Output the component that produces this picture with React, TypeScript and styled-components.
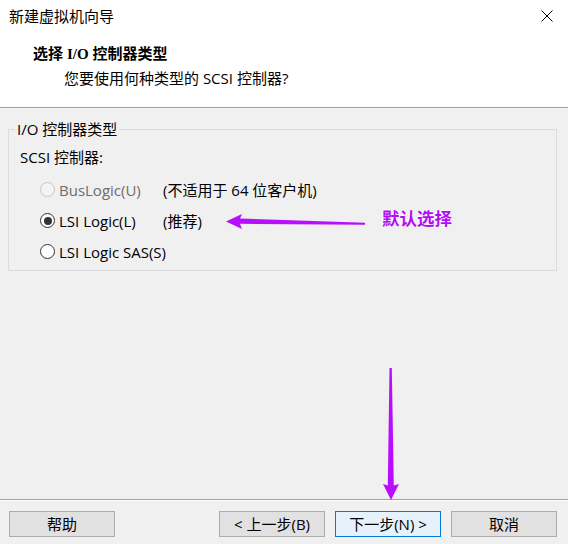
import React from "react";
import styled, { createGlobalStyle } from "styled-components";

const Global = createGlobalStyle`
  html, body { margin: 0; padding: 0; background: #f0f0f0; }
  body { font-family: "Open Sans", "Noto Sans CJK SC", sans-serif; font-size: 15px; color: #000; }
`;

const Window = styled.div`
  position: relative;
  width: 568px;
  height: 544px;
  display: flex;
  flex-direction: column;
  background: #f0f0f0;
  overflow: hidden;
`;

const TitleBar = styled.div`
  height: 32px;
  background: #fff;
  display: flex;
  align-items: center;
  justify-content: space-between;
  padding: 0 15px 0 9px;
  line-height: 20px;
`;

const CloseIcon = styled.svg`
  width: 12px;
  height: 12px;
  display: block;
`;

const Header = styled.div`
  background: #fff;
  border-bottom: 1px solid #a0a0a0;
  display: flex;
  flex-direction: column;
  gap: 4px;
  padding-top: 11px;
  box-sizing: border-box;
  height: 76px;
`;

const HeaderTitle = styled.div`
  padding-left: 33px;
  font-weight: 700;
  line-height: 20px;
`;

const SerifPart = styled.span`
  font-family: "Liberation Serif", serif;
  font-weight: 700;
`;

const HeaderSub = styled.div`
  padding-left: 64px;
  line-height: 20px;
`;

const Body = styled.div`
  flex: 1;
  padding: 11px 11px 0 8px;
`;

const Group = styled.fieldset`
  margin: 0;
  padding: 0 0 3px 0;
  border: 1px solid #dcdcdc;
  width: 549px;
  box-sizing: border-box;
`;

const Legend = styled.legend`
  margin-left: 6px;
  padding: 0 2px;
  line-height: 20px;
`;

const SectionLabel = styled.div`
  padding-left: 11px;
  margin-top: 8px;
  line-height: 20px;
`;

const OptionGrid = styled.div`
  display: grid;
  grid-template-columns: 123px auto;
  grid-auto-rows: 31px;
  margin-top: 7px;
  padding-left: 31px;
  align-items: center;
`;

const OptionLabel = styled.div<{ $disabled?: boolean }>`
  display: flex;
  align-items: center;
  gap: 4px;
  white-space: nowrap;
  color: ${(p) => (p.$disabled ? "#6d6d6d" : "#000")};
  line-height: 20px;
`;

const Note = styled.div`
  line-height: 20px;
  white-space: nowrap;
`;

const Radio = styled.span<{ $checked?: boolean; $disabled?: boolean }>`
  width: 15px;
  height: 15px;
  box-sizing: border-box;
  border-radius: 50%;
  border: 1px solid ${(p) => (p.$disabled ? "#c4c4c4" : "#333")};
  background: ${(p) => (p.$disabled ? "#f4f4f4" : "#fff")};
  display: inline-flex;
  align-items: center;
  justify-content: center;
  flex: none;
  &::after {
    content: "";
    width: 8px;
    height: 8px;
    border-radius: 50%;
    background: ${(p) => (p.$checked ? "#333" : "transparent")};
  }
`;

const Footer = styled.div`
  border-top: 1px solid #a0a0a0;
  box-shadow: inset 0 1px 0 #fff;
  padding: 11px 11px 7px 9px;
  display: flex;
  gap: 10px;
`;

const Spacer = styled.div`
  flex: 1;
`;

const Button = styled.button<{ $primary?: boolean }>`
  width: 106px;
  height: 26px;
  box-sizing: border-box;
  margin: 0;
  padding: 0;
  font: inherit;
  line-height: 20px;
  color: #000;
  border: 1px solid ${(p) => (p.$primary ? "#0078d7" : "#adadad")};
  background: ${(p) => (p.$primary ? "#e5f1fb" : "#e1e1e1")};
`;

const Overlay = styled.svg`
  position: absolute;
  left: 0;
  top: 0;
  width: 568px;
  height: 544px;
  pointer-events: none;
`;

const Annotation = styled.div`
  position: absolute;
  left: 382px;
  top: 206px;
  font-family: "Noto Sans CJK SC", sans-serif;
  font-weight: 700;
  font-size: 17.5px;
  line-height: 24px;
  color: #b20cf5;
  text-shadow: 0 0 2px #fff, 0 0 2px #fff, 0 0 3px #fff, 1px 1px 2px #ddd;
`;

const options = [
  { label: "BusLogic(U)", note: "(不适用于 64 位客户机)", checked: false, disabled: true },
  { label: "LSI Logic(L)", note: "(推荐)", checked: true, disabled: false },
  { label: "LSI Logic SAS(S)", note: "", checked: false, disabled: false },
];

export default function App() {
  return (
    <Window>
      <Global />
      <TitleBar>
        <span>新建虚拟机向导</span>
        <CloseIcon viewBox="0 0 12 12">
          <path d="M0.5 0.5 L11.5 11.5 M11.5 0.5 L0.5 11.5" stroke="#000" strokeWidth="1" fill="none" />
        </CloseIcon>
      </TitleBar>
      <Header>
        <HeaderTitle>
          选择 <SerifPart>I/O</SerifPart> 控制器类型
        </HeaderTitle>
        <HeaderSub>您要使用何种类型的 SCSI 控制器?</HeaderSub>
      </Header>
      <Body>
        <Group>
          <Legend>I/O 控制器类型</Legend>
          <SectionLabel>SCSI 控制器:</SectionLabel>
          <OptionGrid>
            {options.map((o) => (
              <React.Fragment key={o.label}>
                <OptionLabel $disabled={o.disabled}>
                  <Radio $checked={o.checked} $disabled={o.disabled} />
                  {o.label}
                </OptionLabel>
                <Note>{o.note}</Note>
              </React.Fragment>
            ))}
          </OptionGrid>
        </Group>
      </Body>
      <Footer>
        <Button>帮助</Button>
        <Spacer />
        <Button>&lt; 上一步(B)</Button>
        <Button $primary>下一步(N) &gt;</Button>
        <Button>取消</Button>
      </Footer>
      <Overlay viewBox="0 0 568 544">
        <polygon
          points="226,221.5 242,214 240,218.5 365,222.7 365,224.7 240,223.8 242,229"
          fill="#b90dff"
        />
        <polygon
          points="389.5,368 391.8,368 393.8,485.5 399,484 391,500 383,484 387.8,485.5"
          fill="#b90dff"
        />
      </Overlay>
      <Annotation>默认选择</Annotation>
    </Window>
  );
}
